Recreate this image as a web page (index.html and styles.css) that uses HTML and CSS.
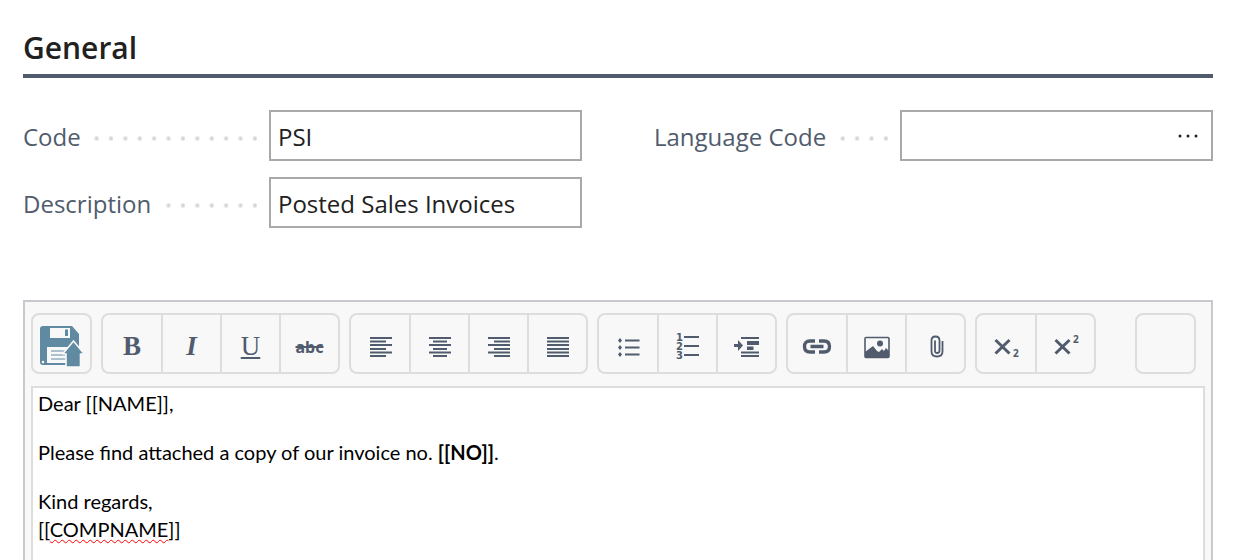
FILE: index.html
```html
<!DOCTYPE html>
<html lang="en">
<head>
<meta charset="utf-8">
<meta name="viewport" content="width=device-width, initial-scale=1">
<title>General</title>
<link rel="stylesheet" href="styles.css">
</head>
<body>
<main class="page">
  <h1 class="section-title">General</h1>
  <form class="fields">
    <div class="column">
      <div class="field">
        <label class="label" for="code"><span class="label-text">Code</span></label>
        <div class="control"><input class="input" id="code" type="text" value="PSI"></div>
      </div>
      <div class="field">
        <label class="label" for="description"><span class="label-text">Description</span></label>
        <div class="control"><input class="input" id="description" type="text" value="Posted Sales Invoices"></div>
      </div>
    </div>
    <div class="column">
      <div class="field">
        <label class="label" for="language"><span class="label-text">Language Code</span></label>
        <div class="control">
          <input class="input" id="language" type="text" value="">
          <button class="lookup" type="button" aria-label="Look up language">
            <svg width="24" height="8" viewBox="0 0 24 8" fill="#222"><circle cx="2" cy="4" r="1.500"/><circle cx="10" cy="4" r="1.500"/><circle cx="18" cy="4" r="1.500"/></svg>
          </button>
        </div>
      </div>
    </div>
  </form>

  <section class="editor">
    <div class="toolbar" role="toolbar" aria-label="Formatting">
      <div class="group">
        <button class="tool" type="button" aria-label="Save">
          <svg width="44" height="42" viewBox="0 0 44 42">
            <path fill="#5f8aa1" d="M3 0H32L39 8V39H3Q0 39 0 36V3Q0 0 3 0Z"/>
            <path fill="#f8f8f8" d="M10 2H30V12H10ZM7 21H34V37H7Z"/>
            <path fill="#5f8aa1" d="M25 3.500H28V10H25Z"/>
            <path stroke="#5f8aa1" stroke-width="1.200" d="M11 25H30M11 29H30M11 33H30"/>
            <circle cx="3" cy="36" r="1.300" fill="#f8f8f8"/>
            <path fill="#5f8aa1" stroke="#f8f8f8" stroke-width="1.600" d="M33.500 15L43.500 27V28H40.500V41H26V28H23.500V27Z"/>
          </svg>
        </button>
      </div>
      <div class="group">
        <button class="tool bold" type="button" aria-label="Bold">B</button>
        <button class="tool italic" type="button" aria-label="Italic">I</button>
        <button class="tool underline" type="button" aria-label="Underline">U</button>
        <button class="tool strike" type="button" aria-label="Strikethrough">abc</button>
      </div>
      <div class="group">
        <button class="tool" type="button" aria-label="Align left">
          <svg class="lines" width="24" height="24" viewBox="0 0 24 24"><path d="M2 3H24M2 6.500H18M2 10H24M2 14H18M2 17.500H24M2 21H18"/></svg>
        </button>
        <button class="tool" type="button" aria-label="Align center">
          <svg class="lines" width="24" height="24" viewBox="0 0 24 24"><path d="M1 3H23M5 6.500H19M1 10H23M5 14H19M1 17.500H23M5 21H19"/></svg>
        </button>
        <button class="tool" type="button" aria-label="Align right">
          <svg class="lines" width="24" height="24" viewBox="0 0 24 24"><path d="M1 3H23M7 6.500H23M1 10H23M7 14H23M1 17.500H23M7 21H23"/></svg>
        </button>
        <button class="tool" type="button" aria-label="Justify">
          <svg class="lines" width="24" height="24" viewBox="0 0 24 24"><path d="M1 3H23M1 6.500H23M1 10H23M1 14H23M1 17.500H23M1 21H23"/></svg>
        </button>
      </div>
      <div class="group">
        <button class="tool" type="button" aria-label="Bulleted list">
          <svg class="lines" width="24" height="24" viewBox="0 0 24 24"><path d="M9 5.500H23.500M9 12.500H23.500M9 19.500H23.500"/><path fill="#505c6d" stroke="none" d="M4 3L6 5.500L4 8L2 5.500ZM4 10L6 12.500L4 15L2 12.500ZM4 17L6 19.500L4 22L2 19.500Z"/></svg>
        </button>
        <button class="tool" type="button" aria-label="Numbered list">
          <svg class="lines" width="24" height="30" viewBox="0 0 24 30"><path d="M8 5H23M8 14H23M8 23H23"/><g class="digits"><text x="0" y="9">1</text><text x="0" y="18">2</text><text x="0" y="27">3</text></g></svg>
        </button>
        <button class="tool" type="button" aria-label="Indent">
          <svg class="lines" width="28" height="24" viewBox="0 0 28 24"><path d="M8 3H26M8 17.500H26M8 21H26"/><path fill="#505c6d" stroke="none" d="M14 6H26V10H14ZM14 11.500H20.500V15H14ZM1 9H5V5L10 10.500L5 16V12H1Z"/></svg>
        </button>
      </div>
      <div class="group">
        <button class="tool" type="button" aria-label="Insert link">
          <svg width="30" height="18" viewBox="0 0 30 18" fill="none" stroke="#505c6d" stroke-width="3.300"><path d="M13 3H8Q2.500 3 2.500 8.500T8 14H13M17 3H22Q27.500 3 27.500 8.500T22 14H17M8.500 8.500H21.500"/></svg>
        </button>
        <button class="tool" type="button" aria-label="Insert image">
          <svg width="26" height="24" viewBox="0 0 26 24"><rect x="1" y="2.500" width="24" height="20" rx="1" fill="none" stroke="#505c6d" stroke-width="1.600"/><circle cx="16" cy="8.500" r="3" fill="#505c6d"/><path fill="#505c6d" d="M1 17L5 14L9 11L13 16L15 17L18 14L20 16L22 13L25 16V23H1Z"/></svg>
        </button>
        <button class="tool" type="button" aria-label="Attach file">
          <svg width="16" height="24" viewBox="0 0 16 24" fill="none" stroke="#505c6d" stroke-width="1.800"><path d="M14.500 6V16.500Q14.500 21.500 9 21.500T3.500 16.500V5.500Q3.500 1.500 7.500 1.500T11.500 5.500V15.500Q11.500 18 9.200 18T7 15.500V5.500"/></svg>
        </button>
      </div>
      <div class="group">
        <button class="tool" type="button" aria-label="Subscript">
          <svg class="script" width="26" height="30" viewBox="0 0 26 30"><path d="M2.500 8L16.500 21.500M16.500 8L2.500 21.500"/><text x="20" y="25">2</text></svg>
        </button>
        <button class="tool" type="button" aria-label="Superscript">
          <svg class="script" width="26" height="30" viewBox="0 0 26 30"><path d="M2.500 8L16.500 21.500M16.500 8L2.500 21.500"/><text x="20" y="11">2</text></svg>
        </button>
      </div>
      <div class="group group-end">
        <button class="tool" type="button" aria-label="More"></button>
      </div>
    </div>
    <div class="content" role="textbox" aria-multiline="true" aria-label="Message body" contenteditable="true" spellcheck="false">
      <p class="paragraph">Dear [[NAME]],</p>
      <p class="paragraph">Please find attached a copy of our invoice no. <b>[[NO]]</b>.</p>
      <p class="paragraph">Kind regards,<br>[[<span class="misspelled">COMPNAME</span>]]</p>
    </div>
  </section>
</main>
</body>
</html>
```

FILE: styles.css
```css
* {
  box-sizing: border-box;
}

body {
  margin: 0;
  background: #fff;
  color: #212121;
  font-family: "Open Sans", "Noto Sans", sans-serif;
}

.page {
  display: flex;
  flex-direction: column;
  min-height: 100vh;
  padding: 26px 23px 0;
}

.section-title {
  margin: 0;
  padding-bottom: 4px;
  border-bottom: 4px solid #505c6d;
  font-size: 30px;
  font-weight: 600;
  line-height: 44px;
}

.fields {
  display: grid;
  grid-template-columns: repeat(2, minmax(0, 1fr));
  gap: 72px;
  margin: 32px 0 72px;
}

.column {
  display: flex;
  flex-direction: column;
  gap: 16px;
}

.field {
  display: grid;
  grid-template-columns: 44% 56%;
}

.label {
  display: flex;
  align-items: center;
  margin-right: 12px;
  padding-top: 2px;
  background-image: radial-gradient(circle at calc(100% - 2px) 50%, #d2d4da 1px, transparent 3px);
  background-position: right 3px;
  background-repeat: repeat-x;
  background-size: 6.150% 100%;
  white-space: nowrap;
}

.label-text {
  padding-right: 12px;
  background: #fff;
  color: #505c6d;
  font-size: 24px;
  line-height: 36px;
}

.control {
  display: flex;
  height: 51px;
  border: 2px solid #a9a9a9;
}

.input {
  flex: 1;
  min-width: 0;
  padding: 2px 7px 0;
  border: 0;
  outline: 0;
  background: transparent;
  color: #212121;
  font-family: inherit;
  font-size: 24px;
}

.lookup {
  padding: 0 9px;
  border: 0;
  background: transparent;
}

.editor {
  display: flex;
  flex: 1;
  flex-direction: column;
  gap: 12px;
  padding: 11px 6px 0;
  border: 2px solid #c8c8ce;
  border-bottom: 0;
  background: #f8f8f8;
}

.toolbar {
  display: flex;
  flex-wrap: wrap;
  gap: 9px;
}

.group {
  display: flex;
  height: 61px;
  border: 2px solid #ddd;
  border-radius: 8px;
}

.group-end {
  margin-right: 9px;
  margin-left: auto;
}

.tool {
  display: flex;
  align-items: center;
  justify-content: center;
  width: 59px;
  padding: 6px 0 0;
  border: 0;
  background: transparent;
  color: #505c6d;
}

.tool:first-child {
  width: 58px;
}

.tool:only-child {
  width: 57px;
}

.tool + .tool {
  border-left: 2px solid #ddd;
}

.bold,
.italic,
.underline {
  font-family: "Liberation Serif", serif;
  font-size: 27px;
}

.bold {
  font-weight: 700;
}

.italic {
  font-style: italic;
  font-weight: 700;
}

.underline {
  text-decoration: underline;
  text-decoration-thickness: 2px;
  text-underline-offset: 2px;
}

.strike {
  font-family: "Noto Sans", sans-serif;
  font-size: 16px;
  font-weight: 700;
  text-decoration: line-through;
  text-decoration-thickness: 2px;
}

.lines {
  fill: none;
  stroke: #505c6d;
  stroke-width: 1.8;
}

.digits {
  fill: #505c6d;
  stroke: none;
  font-family: "DejaVu Sans", sans-serif;
  font-size: 10px;
  font-weight: 700;
}

.script {
  fill: #505c6d;
  font-family: "Noto Sans", sans-serif;
  font-size: 10px;
  font-weight: 700;
}

.script path {
  stroke: #505c6d;
  stroke-width: 3;
}

.content {
  flex: 1;
  padding: 1px 5px 0;
  border: 2px solid #ddd;
  border-bottom: 0;
  outline: 0;
  background: #fff;
  color: #000;
  font-family: Lato, sans-serif;
  font-size: 20px;
  line-height: 28px;
}

.paragraph {
  margin: 0 0 21px;
}

.misspelled {
  text-decoration: underline wavy #f00;
  text-decoration-thickness: 1px;
  text-decoration-skip-ink: none;
  text-underline-offset: 2px;
}
```
